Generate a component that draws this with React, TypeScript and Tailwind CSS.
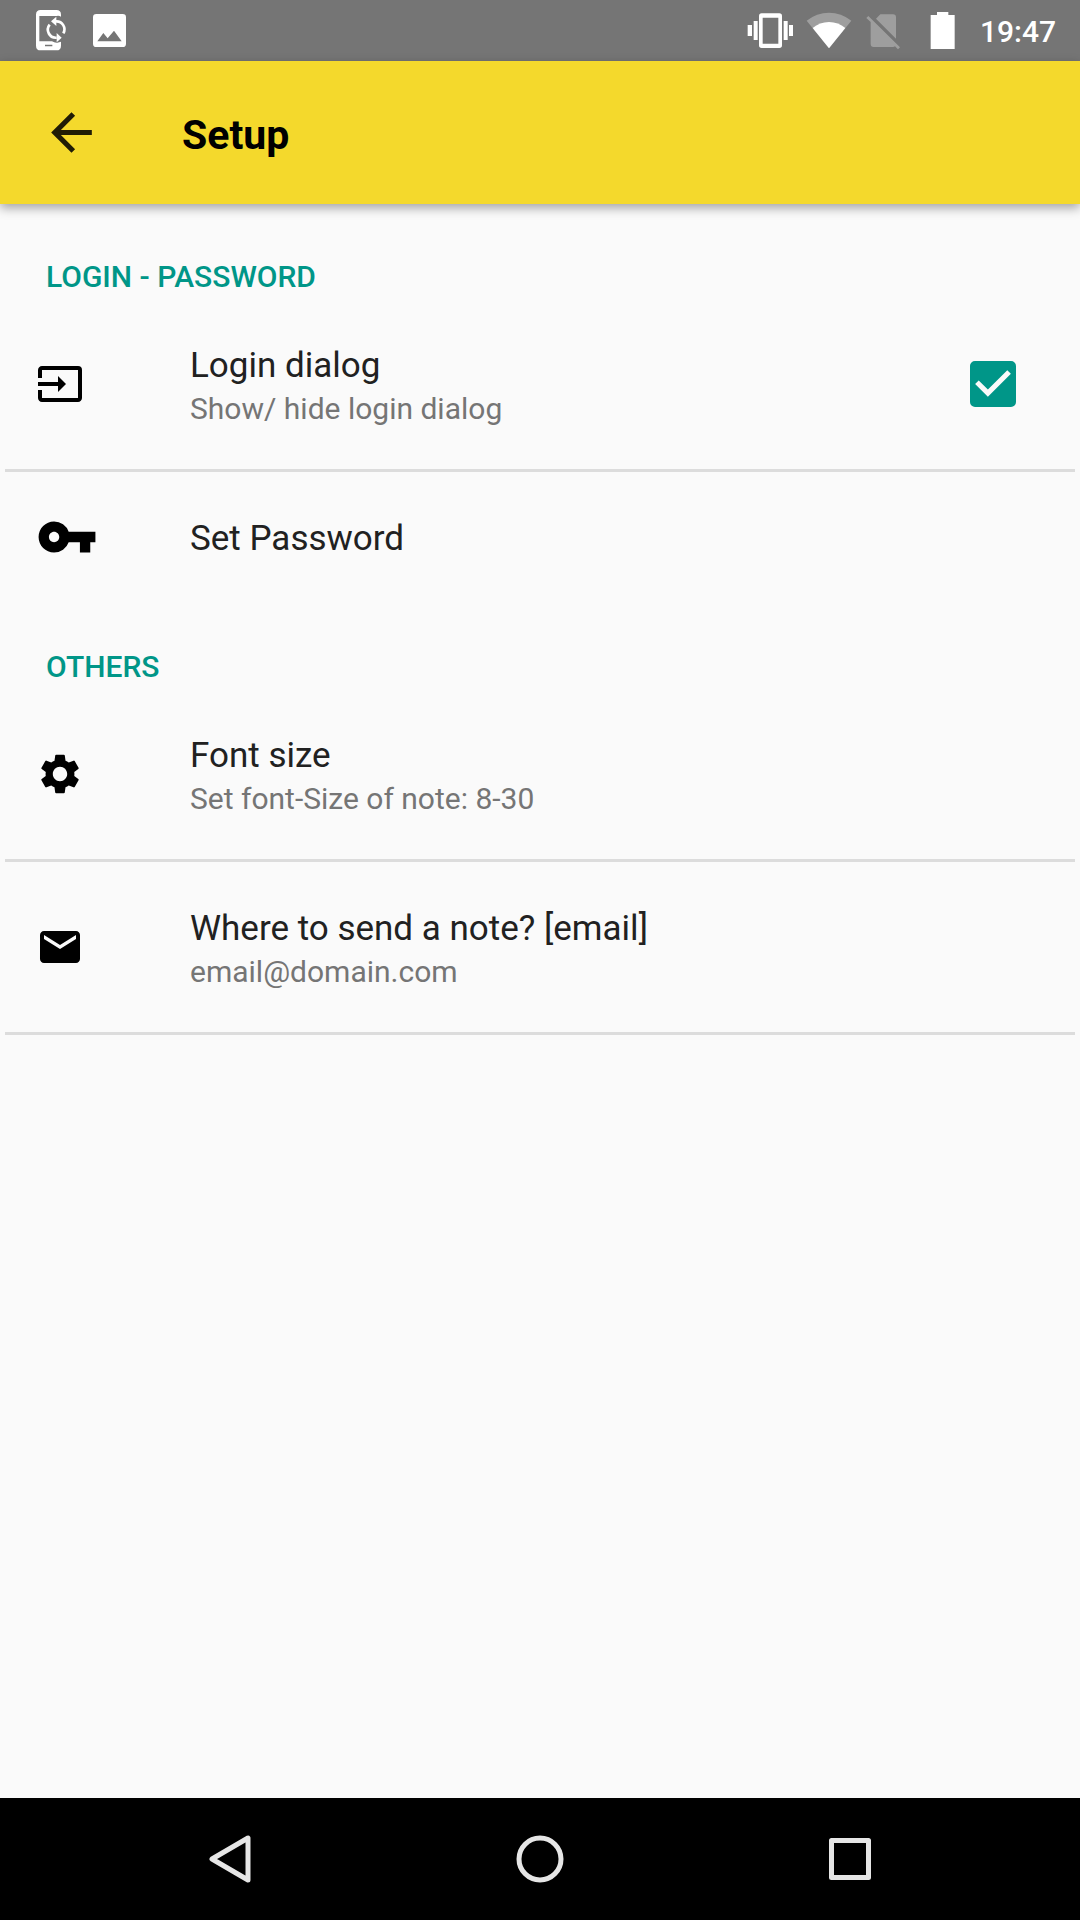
import { useState } from 'react';
import type { ReactNode } from 'react';
import clsx from 'clsx';
import { MdArrowBack, MdEmail, MdInput, MdSettings, MdVpnKey } from 'react-icons/md';

function StatusBar() {
  return (
    <div className="h-[61px] bg-[#757575] text-white flex items-center justify-between pl-[34px] pr-6 shrink-0">
      <div className="flex items-center gap-[25px]">
        {/* Phone sync */}
        <svg className="w-[34px] h-[45px]" viewBox="102 24 102 135" fill="currentColor">
          <path d="M122 30h47q14 0 14 14v6q-7-5-14-2H118v76h38q8 5 16 4l11-3v12q0 14-14 14h-47q-14 0-14-14V44q0-14 14-14zM135 134v5h22v-5z" fillRule="evenodd" />
          <path d="M168 64a24 24 0 0 1 22 36M170 113a24 24 0 0 1-21-39" fill="none" stroke="currentColor" strokeWidth="8" />
          <path d="M153 64l16-14v28zM185 113l-15-14v28z" />
        </svg>
        {/* Picture */}
        <svg className="w-[33px] h-[45px]" viewBox="279 24 99 135" fill="currentColor">
          <path d="M289 42h79q10 0 10 10v79q0 10-10 10h-79q-10 0-10-10V52q0-10 10-10zM292 124h73l-23-32-19 23-13-16z" fillRule="evenodd" />
        </svg>
      </div>

      <div className="flex items-center gap-3">
        {/* Vibrate */}
        <svg className="w-[47px] h-[45px]" viewBox="78 24 141 135" fill="currentColor">
          <path d="M122 40h53q8 0 8 8v88q0 8-8 8h-53q-8 0-8-8V48q0-8 8-8zM125 53v78h47V53z" fillRule="evenodd" />
          <path d="M80 75h13v33H80zM98 63h12v57H98zM188 63h12v57h-12zM204 75h12v33h-12z" />
        </svg>
        {/* Wifi */}
        <svg className="w-[46px] h-[45px]" viewBox="255 24 138 135" fill="currentColor">
          <path d="M257 62Q287 38 324 38t67 24l-67 83z" opacity=".3" />
          <path d="M275 84q21-18 49-18t49 18l-49 61z" />
        </svg>
        {/* No SIM */}
        <svg className="w-[37px] h-[45px]" viewBox="429 24 111 135" fill="currentColor">
          <path
            d="M442 48l95 94-6 6-9-9q-3 2-6 2h-58q-9 0-9-9V66l-13-12zM465 56l13-13h38q9 0 9 9v64z"
            opacity=".3"
          />
        </svg>
        {/* Battery */}
        <svg className="w-[55px] h-[45px]" viewBox="576 24 165 135" fill="currentColor">
          <path d="M648 36h34v9h19v102h-72V45h19z" />
        </svg>
        <span className="pt-0.5 text-[30px] leading-[36px] font-medium">19:47</span>
      </div>
    </div>
  );
}

function SectionTitle({ children }: { children: ReactNode }) {
  return <h2 className="h-[87px] pl-[46px] pt-[47px] text-[30px] leading-[36px] font-medium text-[#009688] uppercase">{children}</h2>;
}

interface RowProps {
  icon: ReactNode;
  title: string;
  summary?: string;
}

function RowContent({ icon, title, summary }: RowProps) {
  return (
    <>
      <span className="w-[154px] shrink-0 text-black">{icon}</span>
      <span className="flex-1 min-w-0 pt-[3px] flex flex-col">
        <span className="text-[35px] leading-[46px] text-[#212121]">{title}</span>
        {summary && <span className="text-[30px] leading-[40px] text-[#757575]">{summary}</span>}
      </span>
    </>
  );
}

function ActionRow({ divider = true, ...row }: RowProps & { divider?: boolean }) {
  return (
    <div className={clsx('mx-[5px]', divider && 'border-b-3 border-[#dcdcdc]')}>
      <button className={clsx('w-full flex items-center pl-[31px] text-left', divider ? 'h-[170px]' : 'h-[130px]')}>
        <RowContent {...row} />
      </button>
    </div>
  );
}

export default function App() {
  const [loginDialog, setLoginDialog] = useState(true);

  return (
    <div className="min-h-screen flex flex-col bg-[#fafafa] font-['Roboto',sans-serif]">
      <StatusBar />

      <header className="h-[143px] bg-[#f4d92c] flex items-center pl-[41px] shrink-0 shadow-[0_4px_10px_rgba(0,0,0,0.35)]">
        <button aria-label="Back" className="text-black/87">
          <MdArrowBack size={61} />
        </button>
        <h1 className="ml-20 pt-1 text-[41px] leading-[48px] font-bold text-black">Setup</h1>
      </header>

      <main className="flex-1 pt-2">
        <SectionTitle>Login - Password</SectionTitle>
        <div className="mx-[5px] border-b-3 border-[#dcdcdc]">
          <label className="h-[170px] flex items-center pl-[31px] pr-[59px]">
            <RowContent icon={<MdInput size={48} />} title="Login dialog" summary="Show/ hide login dialog" />
            <span className="relative size-[46px] shrink-0">
              <input
                type="checkbox"
                checked={loginDialog}
                onChange={e => setLoginDialog(e.target.checked)}
                className="block size-[46px] appearance-none rounded-[5px] border-[5px] border-[#757575] checked:border-[#009688] checked:bg-[#009688]"
              />
              {loginDialog && (
                <svg className="absolute inset-0 pointer-events-none" viewBox="3 3 18 18" fill="#fafafa">
                  <path d="M10 17l-5-5 1.41-1.41L10 14.17l7.59-7.59L19 8z" />
                </svg>
              )}
            </span>
          </label>
        </div>
        <ActionRow icon={<MdVpnKey size={62} />} title="Set Password" divider={false} />

        <SectionTitle>Others</SectionTitle>
        <ActionRow icon={<MdSettings size={48} />} title="Font size" summary="Set font-Size of note: 8-30" />
        <ActionRow icon={<MdEmail size={48} />} title="Where to send a note? [email]" summary="email@domain.com" />
      </main>

      <nav className="h-[122px] bg-black text-[#e6e6e6] flex items-center px-[75px] shrink-0">
        <button aria-label="Back" className="flex-1 flex justify-center">
          <svg className="size-12" viewBox="0 0 48 48" fill="none" stroke="currentColor" strokeWidth="5" strokeLinejoin="round">
            <path d="M42 3v42L6 24z" />
          </svg>
        </button>
        <button aria-label="Home" className="flex-1 flex justify-center">
          <svg className="size-12" viewBox="0 0 48 48" fill="none" stroke="currentColor" strokeWidth="5">
            <circle cx="24" cy="24" r="21" />
          </svg>
        </button>
        <button aria-label="Recent apps" className="flex-1 flex justify-center">
          <svg className="size-12" viewBox="0 0 48 48" fill="none" stroke="currentColor" strokeWidth="5" strokeLinejoin="round">
            <path d="M5.500 5.500h37v37h-37z" />
          </svg>
        </button>
      </nav>
    </div>
  );
}
